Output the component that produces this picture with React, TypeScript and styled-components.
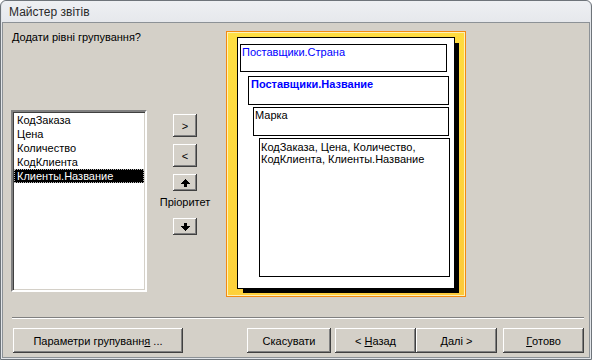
import React from 'react';
import styled, { createGlobalStyle } from 'styled-components';

const GlobalStyle = createGlobalStyle`
  html, body {
    margin: 0;
    padding: 0;
    background: #ffffff;
  }
  body {
    font-family: "Liberation Sans", Arial, sans-serif;
    font-size: 11px;
    color: #000;
  }
`;

const Window = styled.div`
  width: 592px;
  height: 360px;
  box-sizing: border-box;
  border: 1px solid #6e747a;
  border-radius: 6px 6px 0 0;
  background: #e2e5e9;
  padding: 0 1px 1px 1px;
  display: flex;
  flex-direction: column;
`;

const TitleBar = styled.div`
  height: 21px;
  flex: none;
  display: flex;
  align-items: center;
  padding-left: 7px;
  border-radius: 5px 5px 0 0;
  background: linear-gradient(#eef0f3, #e6e8ec);
  font-size: 12px;
  color: #2a2a2a;
`;

const Body = styled.div`
  flex: 1;
  display: flex;
  flex-direction: column;
  border: 1px solid #8c9196;
  background: #d4d0c8;
`;

const MainRow = styled.div`
  display: flex;
  margin-top: 8px;
  padding-left: 8px;
  height: 266px;
`;

const LeftColumn = styled.div`
  width: 136px;
  display: flex;
  flex-direction: column;
`;

const Heading = styled.div`
  height: 13px;
  line-height: 13px;
  padding-left: 1px;
  white-space: nowrap;
`;

const ListBox = styled.div`
  margin-top: 66px;
  height: 182px;
  box-sizing: border-box;
  background: #fff;
  border-style: solid;
  border-width: 2px;
  border-color: #808080 #ffffff #ffffff #808080;
  box-shadow: inset 1px 1px 0 #404040, inset -1px -1px 0 #d4d0c8;
  padding: 1px 1px 0 0;
`;

const ListItem = styled.div<{ $selected?: boolean }>`
  height: 14px;
  line-height: 14px;
  padding-left: 3px;
  margin-left: 1px;
  white-space: nowrap;
  background: ${p => (p.$selected ? '#000' : 'transparent')};
  color: ${p => (p.$selected ? '#fff' : '#000')};
  outline: ${p => (p.$selected ? '1px dotted #b8b8b8' : 'none')};
  outline-offset: -1px;
`;

const MiddleColumn = styled.div`
  width: 50px;
  margin-left: 13px;
  padding-top: 83px;
  display: flex;
  flex-direction: column;
  align-items: center;
`;

const RaisedButton = styled.button<{ $w: number; $h: number; $gap?: number }>`
  width: ${p => p.$w}px;
  height: ${p => p.$h}px;
  margin: ${p => p.$gap ?? 0}px 0 0 0;
  padding: 0;
  flex: none;
  border: none;
  background: #d4d0c8;
  box-shadow: inset -1px -1px 0 #404040, inset 1px 1px 0 #ffffff,
    inset -2px -2px 0 #808080, inset 2px 2px 0 #d4d0c8;
  font-family: "Liberation Sans", Arial, sans-serif;
  font-size: 11px;
  color: #000;
  display: flex;
  align-items: center;
  justify-content: center;
  cursor: default;
`;

const PriorityLabel = styled.div`
  margin-top: 5px;
  height: 13px;
  line-height: 13px;
  white-space: nowrap;
`;

const PreviewFrame = styled.div`
  margin-left: 16px;
  width: 240px;
  height: 266px;
  box-sizing: border-box;
  border: 1px solid #f38a12;
  box-shadow: inset 0 0 0 1px #fff1b4;
  background: linear-gradient(160deg, #ffdf42 0%, #fed53c 60%, #fcc93a 100%);
  padding: 5px 0 0 10px;
`;

const Page = styled.div`
  width: 218px;
  height: 252px;
  box-sizing: border-box;
  border: 1px solid #000;
  background: #fff;
  box-shadow: 5px 5px 0 -1px #000;
  padding-top: 6px;
  display: flex;
  flex-direction: column;
`;

const GroupBox = styled.div<{
  $indent: number;
  $w: number;
  $h: number;
  $gap: number;
  $blue?: boolean;
  $bold?: boolean;
  $pad?: number;
}>`
  margin-left: ${p => p.$indent}px;
  margin-top: ${p => p.$gap}px;
  width: ${p => p.$w}px;
  height: ${p => p.$h}px;
  box-sizing: border-box;
  border: 1px solid #000;
  padding: 1px 0 0 ${p => p.$pad ?? 1}px;
  line-height: 13px;
  color: ${p => (p.$blue ? '#0000ff' : '#000')};
  font-weight: ${p => (p.$bold ? 'bold' : 'normal')};
  white-space: nowrap;
`;

const DetailBox = styled(GroupBox)`
  line-height: 12px;
  padding-top: 2px;
  white-space: normal;
`;

const Separator = styled.div`
  margin: 20px 5px 0 9px;
  height: 0;
  border-top: 1px solid #808080;
  border-bottom: 1px solid #ffffff;
`;

const ButtonRow = styled.div`
  display: flex;
  margin-top: 9px;
  padding-left: 10px;
`;

const Key = styled.span`
  text-decoration: underline;
`;

const ArrowUp = () => (
  <svg width="9" height="8" viewBox="0 0 9 8" shapeRendering="crispEdges">
    <path d="M4 0h1v1h1v1h1v1h1v1h1v1H6v3H3V5H0V4h1V3h1V2h1V1h1z" fill="#000" />
  </svg>
);

const ArrowDown = () => (
  <svg width="9" height="8" viewBox="0 0 9 8" shapeRendering="crispEdges">
    <path d="M4 8h1v-1h1v-1h1v-1h1v-1h1v-1H6V0H3v3H0v1h1v1h1v1h1v1h1z" fill="#000" />
  </svg>
);

const fields = ['КодЗаказа', 'Цена', 'Количество', 'КодКлиента', 'Клиенты.Название'];

export default function App() {
  return (
    <>
      <GlobalStyle />
      <Window>
        <TitleBar>Майстер звітів</TitleBar>
        <Body>
          <MainRow>
            <LeftColumn>
              <Heading>Додати рівні групування?</Heading>
              <ListBox>
                {fields.map((f, i) => (
                  <ListItem key={f} $selected={i === fields.length - 1}>
                    {f}
                  </ListItem>
                ))}
              </ListBox>
            </LeftColumn>

            <MiddleColumn>
              <RaisedButton $w={24} $h={23}>&gt;</RaisedButton>
              <RaisedButton $w={24} $h={23} $gap={7}>&lt;</RaisedButton>
              <RaisedButton $w={24} $h={17} $gap={7}>
                <ArrowUp />
              </RaisedButton>
              <PriorityLabel>Пріоритет</PriorityLabel>
              <RaisedButton $w={24} $h={17} $gap={9}>
                <ArrowDown />
              </RaisedButton>
            </MiddleColumn>

            <PreviewFrame>
              <Page>
                <GroupBox $indent={2} $w={207} $h={28} $gap={0} $blue>
                  Поставщики.Страна
                </GroupBox>
                <GroupBox $indent={10} $w={201} $h={29} $gap={4} $blue $bold $pad={2}>
                  Поставщики.Название
                </GroupBox>
                <GroupBox $indent={15} $w={196} $h={29} $gap={2}>
                  Марка
                </GroupBox>
                <DetailBox $indent={21} $w={191} $h={139} $gap={2}>
                  КодЗаказа, Цена, Количество,
                  <br />
                  КодКлиента, Клиенты.Название
                </DetailBox>
              </Page>
            </PreviewFrame>
          </MainRow>

          <Separator />

          <ButtonRow>
            <RaisedButton $w={170} $h={25}>
              Параметри групуванн<Key>я</Key>&nbsp;...
            </RaisedButton>
            <RaisedButton $w={84} $h={25} style={{ marginLeft: 64 }}>
              Скасувати
            </RaisedButton>
            <RaisedButton $w={81} $h={25} style={{ marginLeft: 4 }}>
              &lt;&nbsp;<Key>Н</Key>азад
            </RaisedButton>
            <RaisedButton $w={81} $h={25}>
              <Key>Д</Key>алі&nbsp;&gt;
            </RaisedButton>
            <RaisedButton $w={81} $h={25} style={{ marginLeft: 6 }}>
              <Key>Г</Key>отово
            </RaisedButton>
          </ButtonRow>
        </Body>
      </Window>
    </>
  );
}
